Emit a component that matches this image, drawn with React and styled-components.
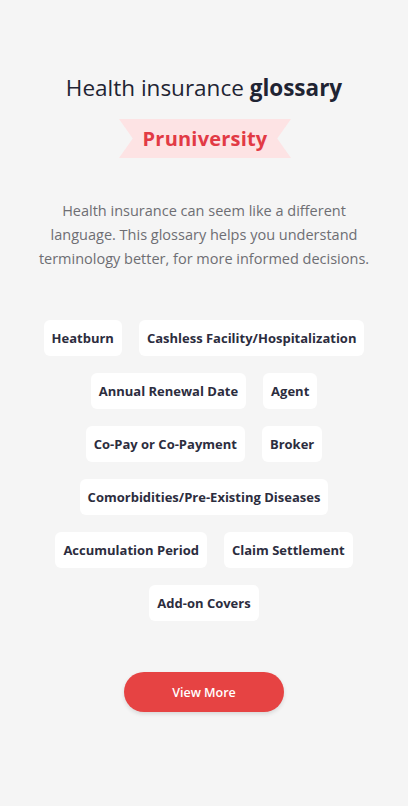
import styled, { createGlobalStyle } from 'styled-components';

const GlobalStyle = createGlobalStyle`
  body {
    margin: 0;
    background: #f5f5f5;
    font-family: 'Open Sans', 'Noto Sans', sans-serif;
  }
`;

const terms = [
  ['Heatburn', 'Cashless Facility/Hospitalization'],
  ['Annual Renewal Date', 'Agent'],
  ['Co-Pay or Co-Payment', 'Broker'],
  ['Comorbidities/Pre-Existing Diseases'],
  ['Accumulation Period', 'Claim Settlement'],
  ['Add-on Covers'],
];

function App() {
  return (
    <>
      <GlobalStyle />
      <Page>
        <Title>
          Health insurance <b>glossary</b>
        </Title>
        <Ribbon>Pruniversity</Ribbon>
        <Intro>
          Health insurance can seem like a different language. This glossary helps you
          understand terminology better, for more informed decisions.
        </Intro>
        <Terms>
          {terms.map((row, i) => (
            <TermRow key={i}>
              {row.map((t) => (
                <Chip key={t}>{t}</Chip>
              ))}
            </TermRow>
          ))}
        </Terms>
        <ViewMore>View More</ViewMore>
      </Page>
    </>
  );
}

export default App;

const Page = styled.div`
  width: 408px;
  min-height: 806px;
  box-sizing: border-box;
  padding-top: 73px;
  display: flex;
  flex-direction: column;
  align-items: center;
`;

const Title = styled.h1`
  margin: 0;
  font-family: 'Open Sans', sans-serif;
  font-weight: 400;
  font-size: 22.5px;
  line-height: 30px;
  color: #1f2433;
  b {
    font-weight: 700;
  }
`;

const Ribbon = styled.div`
  margin-top: 16px;
  width: 172px;
  height: 39px;
  margin-left: 2px;
  background: #fde3e4;
  clip-path: polygon(0 0, 100% 0, 92% 50%, 100% 100%, 0 100%, 8% 50%);
  display: flex;
  align-items: center;
  justify-content: center;
  font-family: 'Open Sans', sans-serif;
  font-weight: 700;
  font-size: 20px;
  letter-spacing: 0.2px;
  color: #e23a45;
`;

const Intro = styled.p`
  margin: 41px 0 0;
  width: 346px;
  text-align: center;
  font-family: 'Open Sans', sans-serif;
  font-size: 14.5px;
  line-height: 24px;
  color: #6e6e73;
`;

const Terms = styled.div`
  margin-top: 49px;
  display: flex;
  flex-direction: column;
  align-items: center;
  gap: 17px;
`;

const TermRow = styled.div`
  display: flex;
  gap: 17px;
`;

const Chip = styled.span`
  background: #ffffff;
  border-radius: 6px;
  padding: 0 8px;
  height: 36px;
  display: flex;
  align-items: center;
  font-family: 'Open Sans', sans-serif;
  font-weight: 700;
  font-size: 13px;
  color: #2c2d3e;
  white-space: nowrap;
`;

const ViewMore = styled.button`
  margin-top: 51px;
  width: 160px;
  height: 40px;
  border: none;
  border-radius: 20px;
  background: #e64343;
  color: #ffffff;
  font-family: 'Open Sans', sans-serif;
  font-size: 12.5px;
  font-weight: 600;
  box-shadow: 0 2px 4px rgba(0, 0, 0, 0.12);
`;
